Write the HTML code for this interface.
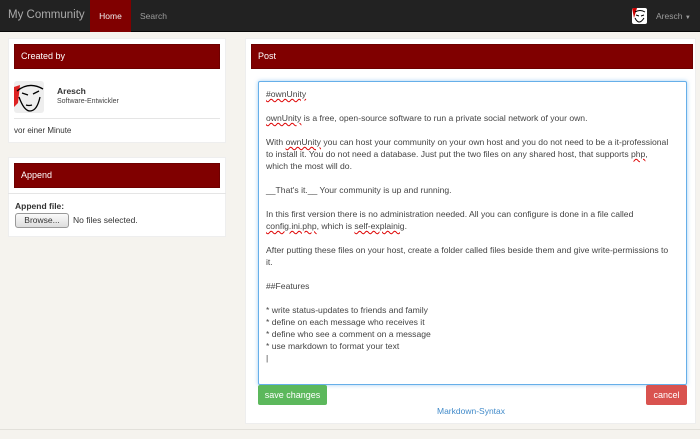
<!DOCTYPE html>
<html><head><style>
*{box-sizing:border-box;margin:0;padding:0}
body{width:700px;height:439px;background:#f5f3ee;font-family:"Liberation Sans",sans-serif;position:relative;overflow:hidden;color:#333}
.nav{position:absolute;left:0;top:0;width:700px;height:32px;background:#222;border-bottom:1px solid #080808}
.brand{position:absolute;left:8px;top:9px;font-size:11.5px;color:#aaa}
.home{position:absolute;left:90px;top:0;width:41px;height:32px;background:#800000;color:#eee;font-size:8.5px;line-height:32px;text-align:center}
.search{position:absolute;left:140px;top:0;font-size:8.5px;line-height:32px;color:#9d9d9d}
.user{position:absolute;left:656px;top:0;font-size:8.5px;line-height:32px;color:#9d9d9d}
.av{position:absolute;left:632px;top:8px;width:15px;height:16px;background:#fff;border-radius:2px;overflow:hidden}
.panel{position:absolute;background:#fff;border:1px solid #eee}
.hd{position:absolute;background:#800000;color:#fff;font-size:9px;padding-left:6px;border:1px solid #6d0000}
.ta{position:absolute;left:258px;top:81px;width:429px;height:304px;border:1px solid #66afe9;box-shadow:0 0 4px rgba(102,175,233,.6);border-radius:2px;background:#fff;padding:6px 2px 6px 7px;font-size:8.6px;line-height:12px;color:#444;white-space:pre;overflow:hidden}
.u{text-decoration:underline wavy #d00;text-decoration-thickness:1px}
.btn{position:absolute;top:385px;height:20px;color:#fff;font-size:9px;line-height:20px;text-align:center;border-radius:2px}
</style></head><body>
<div class="nav">
<div class="brand">My Community</div>
<div class="home">Home</div>
<div class="search">Search</div>
<div class="av"><svg width="15" height="16"><path d="M0 0h5l-3 10z" fill="#c00"/><path d="M3 4q5-3 10 0M4 7l3 1M9 8l3-1M3 10q4 8 9 0" stroke="#000" fill="none" stroke-width="1"/></svg></div>
<div class="user">Aresch <span style="font-size:6px">▼</span></div>
</div>

<div class="panel" style="left:8px;top:38px;width:218px;height:105px"></div>
<div class="hd" style="left:14px;top:44px;width:206px;height:25px;line-height:23px">Created by</div>
<div style="position:absolute;left:14px;top:81px;width:30px;height:32px;background:#eee;border-radius:3px;overflow:hidden">
<svg width="30" height="32"><path d="M0 6 6 4 4 22 0 26z" fill="#d22"/><path d="M3 10q12-10 26-2M8 12l6 2M19 13l6-3M5 16q5 14 11 14q7 0 10-14M12 24q3 1 6 0" stroke="#000" fill="none" stroke-width="1.3"/></svg></div>
<div style="position:absolute;left:57px;top:86px;font-size:8.5px;font-weight:bold;color:#333">Aresch</div>
<div style="position:absolute;left:57px;top:98px;font-size:7px;color:#444">Software-Entwickler</div>
<div style="position:absolute;left:14px;top:118px;width:206px;border-top:1px solid #e5e5e5"></div>
<div style="position:absolute;left:14px;top:126px;font-size:8px;color:#333">vor einer Minute</div>

<div class="panel" style="left:8px;top:157px;width:218px;height:80px"></div>
<div class="hd" style="left:14px;top:163px;width:206px;height:25px;line-height:23px">Append</div>
<div style="position:absolute;left:8px;top:193px;width:218px;border-top:1px solid #e5e5e5"></div>
<div style="position:absolute;left:15px;top:201px;font-size:8.5px;font-weight:bold">Append file:</div>
<div style="position:absolute;left:15px;top:213px;width:54px;height:15px;border:1px solid #999;border-radius:3px;background:linear-gradient(#fafafa,#ddd);font-size:8.5px;line-height:13px;text-align:center">Browse...</div>
<div style="position:absolute;left:73px;top:215px;font-size:8.5px">No files selected.</div>

<div class="panel" style="left:245px;top:38px;width:451px;height:386px"></div>
<div class="hd" style="left:251px;top:44px;width:442px;height:25px;line-height:23px">Post</div>
<div class="ta"><span class="u">#ownUnity</span>

<span class="u">ownUnity</span> is a free, open-source software to run a private social network of your own.

With <span class="u">ownUnity</span> you can host your community on your own host and you do not need to be a it-professional
to install it. You do not need a database. Just put the two files on any shared host, that supports <span class="u">php</span>,
which the most will do.

__That's it.__ Your community is up and running.

In this first version there is no administration needed. All you can configure is done in a file called
<span class="u">config.ini.php</span>, which is <span class="u">self-explainig</span>.

After putting these files on your host, create a folder called files beside them and give write-permissions to
it.

##Features

* write status-updates to friends and family
* define on each message who receives it
* define who see a comment on a message
* use markdown to format your text
|</div>
<div class="btn" style="left:258px;width:69px;background:#5cb85c">save changes</div>
<div class="btn" style="left:646px;width:41px;background:#d9534f">cancel</div>
<div style="position:absolute;left:437px;top:406px;font-size:8.5px;color:#428bca">Markdown-Syntax</div>
<div style="position:absolute;left:0;top:429px;width:700px;border-top:1px solid #e2e0da"></div>
</body></html>
